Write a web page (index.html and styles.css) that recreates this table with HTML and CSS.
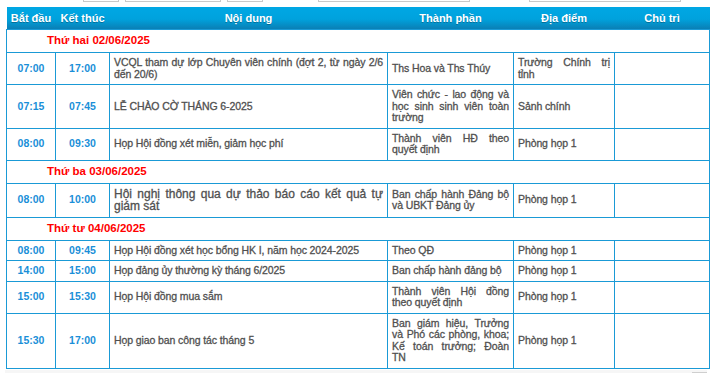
FILE: index.html
```html
<!DOCTYPE html>
<html lang="vi">
<head>
    <meta charset="UTF-8">
    <meta name="viewport" content="width=device-width, initial-scale=1.0">
    <title>Lịch công tác tuần</title>
    <link rel="stylesheet" href="styles.css">
</head>
<body>
    <div class="toolbar">
        <span class="ctl ctl-btn first"></span>
        <span class="ctl ctl-date"></span>
        <span class="ctl ctl-btn"></span>
        <span class="ctl ctl-select wide1"></span>
        <span class="ctl ctl-select wide2"></span>
    </div>

    <table class="schedule">
        <colgroup>
            <col class="c-start">
            <col class="c-end">
            <col class="c-content">
            <col class="c-members">
            <col class="c-place">
            <col class="c-host">
        </colgroup>
        <thead>
            <tr>
                <th>Bắt đầu</th>
                <th>Kết thúc</th>
                <th>Nội dung</th>
                <th>Thành phần</th>
                <th>Địa điểm</th>
                <th>Chủ trì</th>
            </tr>
        </thead>
        <tbody>
            <tr class="day"><td colspan="6">Thứ hai 02/06/2025</td></tr>
            <tr>
                <td class="time">07:00</td>
                <td class="time">17:00</td>
                <td class="text">VCQL tham dự lớp Chuyên viên chính (đợt 2, từ ngày 2/6 đến 20/6)</td>
                <td class="text">Ths Hoa và Ths Thúy</td>
                <td class="text">Trường Chính trị tỉnh</td>
                <td></td>
            </tr>
            <tr>
                <td class="time">07:15</td>
                <td class="time">07:45</td>
                <td class="text">LỄ CHÀO CỜ THÁNG 6-2025</td>
                <td class="text">Viên chức - lao động và học sinh sinh viên toàn trường</td>
                <td class="text">Sảnh chính</td>
                <td></td>
            </tr>
            <tr>
                <td class="time">08:00</td>
                <td class="time">09:30</td>
                <td class="text">Họp Hội đồng xét miễn, giảm học phí</td>
                <td class="text">Thành viên HĐ theo quyết định</td>
                <td class="text">Phòng họp 1</td>
                <td></td>
            </tr>

            <tr class="day"><td colspan="6">Thứ ba 03/06/2025</td></tr>
            <tr>
                <td class="time">08:00</td>
                <td class="time">10:00</td>
                <td class="text big">Hội nghị thông qua dự thảo báo cáo kết quả tự giám sát</td>
                <td class="text">Ban chấp hành Đảng bộ và UBKT Đảng ủy</td>
                <td class="text">Phòng họp 1</td>
                <td></td>
            </tr>

            <tr class="day"><td colspan="6">Thứ tư 04/06/2025</td></tr>
            <tr>
                <td class="time">08:00</td>
                <td class="time">09:45</td>
                <td class="text">Họp Hội đồng xét học bổng HK I, năm học 2024-2025</td>
                <td class="text">Theo QĐ</td>
                <td class="text">Phòng họp 1</td>
                <td></td>
            </tr>
            <tr>
                <td class="time">14:00</td>
                <td class="time">15:00</td>
                <td class="text">Họp đảng ủy thường kỳ tháng 6/2025</td>
                <td class="text">Ban chấp hành đảng bộ</td>
                <td class="text">Phòng họp 1</td>
                <td></td>
            </tr>
            <tr>
                <td class="time">15:00</td>
                <td class="time">15:30</td>
                <td class="text">Họp Hội đồng mua sắm</td>
                <td class="text">Thành viên Hội đồng theo quyết định</td>
                <td class="text">Phòng họp 1</td>
                <td></td>
            </tr>
            <tr>
                <td class="time">15:30</td>
                <td class="time">17:00</td>
                <td class="text">Họp giao ban công tác tháng 5</td>
                <td class="text spread">Ban giám hiệu, Trưởng và Phó các phòng, khoa; Kế toán trưởng; Đoàn<br>TN</td>
                <td class="text">Phòng họp 1</td>
                <td></td>
            </tr>
        </tbody>
    </table>

    <div class="footer">
        <span class="footer-box"></span>
    </div>
</body>
</html>
```

FILE: styles.css
```css
body {
    margin: 0;
    background: #fff;
    font-family: "Liberation Sans", Arial, sans-serif;
    color: #555;
}
.toolbar {
    display: flex;
    align-items: flex-end;
    height: 2px;
    margin-bottom: 5px;
    padding-left: 83px;
}
.ctl {
    flex: none;
    height: 22px;
    border: 1px solid #c9c9c9;
    background: #fff;
}
.ctl-btn {
    width: 34px;
}
.ctl-date {
    width: 94px;
    margin: 0 6px;
}
.ctl-select {
    width: 150px;
}
.wide1 {
    margin-left: 55px;
}
.wide2 {
    margin-left: 59px;
}
.schedule {
    margin-left: 6px;
    width: 703px;
    table-layout: fixed;
    border-collapse: collapse;
}
.c-start { width: 49px; }
.c-end { width: 54px; }
.c-content { width: 278px; }
.c-members { width: 126px; }
.c-place { width: 101px; }
.c-host { width: 95px; }
.schedule th {
    height: 22px;
    padding: 0 2px;
    background: linear-gradient(#00a7e4 0%, #00a2dd 55%, #0a7fb5 100%);
    color: #fff;
    font-size: 11px;
    font-weight: bold;
    text-align: center;
    text-shadow: 0 1px 0 rgba(0, 0, 0, 0.25);
}
.schedule td {
    border: 1px solid #1a9ad6;
    padding: 4px;
    line-height: 11.5px;
    font-size: 10.5px;
    vertical-align: middle;
}
.day td {
    height: 12px;
    padding: 5px 5px 5px 40px;
    color: #f00;
    font-size: 11.5px;
    font-weight: bold;
}
.time {
    text-align: center;
    color: #1a8fd8;
    font-size: 11px;
    font-weight: bold;
}
.text {
    text-align: justify;
    letter-spacing: -0.1px;
    color: #505050;
    -webkit-text-stroke: 0.3px #505050;
}
/* keep the line before the manual break justified */
.spread {
    text-align-last: justify;
}
.schedule td.big {
    font-size: 12px;
    line-height: 12.5px;
    letter-spacing: 0;
}
.footer {
    display: flex;
    justify-content: flex-end;
    margin: 1px 8px 0 5px;
    height: 8px;
    background: #f6f6f6;
}
.footer-box {
    width: 13px;
    height: 12px;
    margin-top: 2px;
    border: 1px solid #cfcfcf;
    background: #eee;
}
```
